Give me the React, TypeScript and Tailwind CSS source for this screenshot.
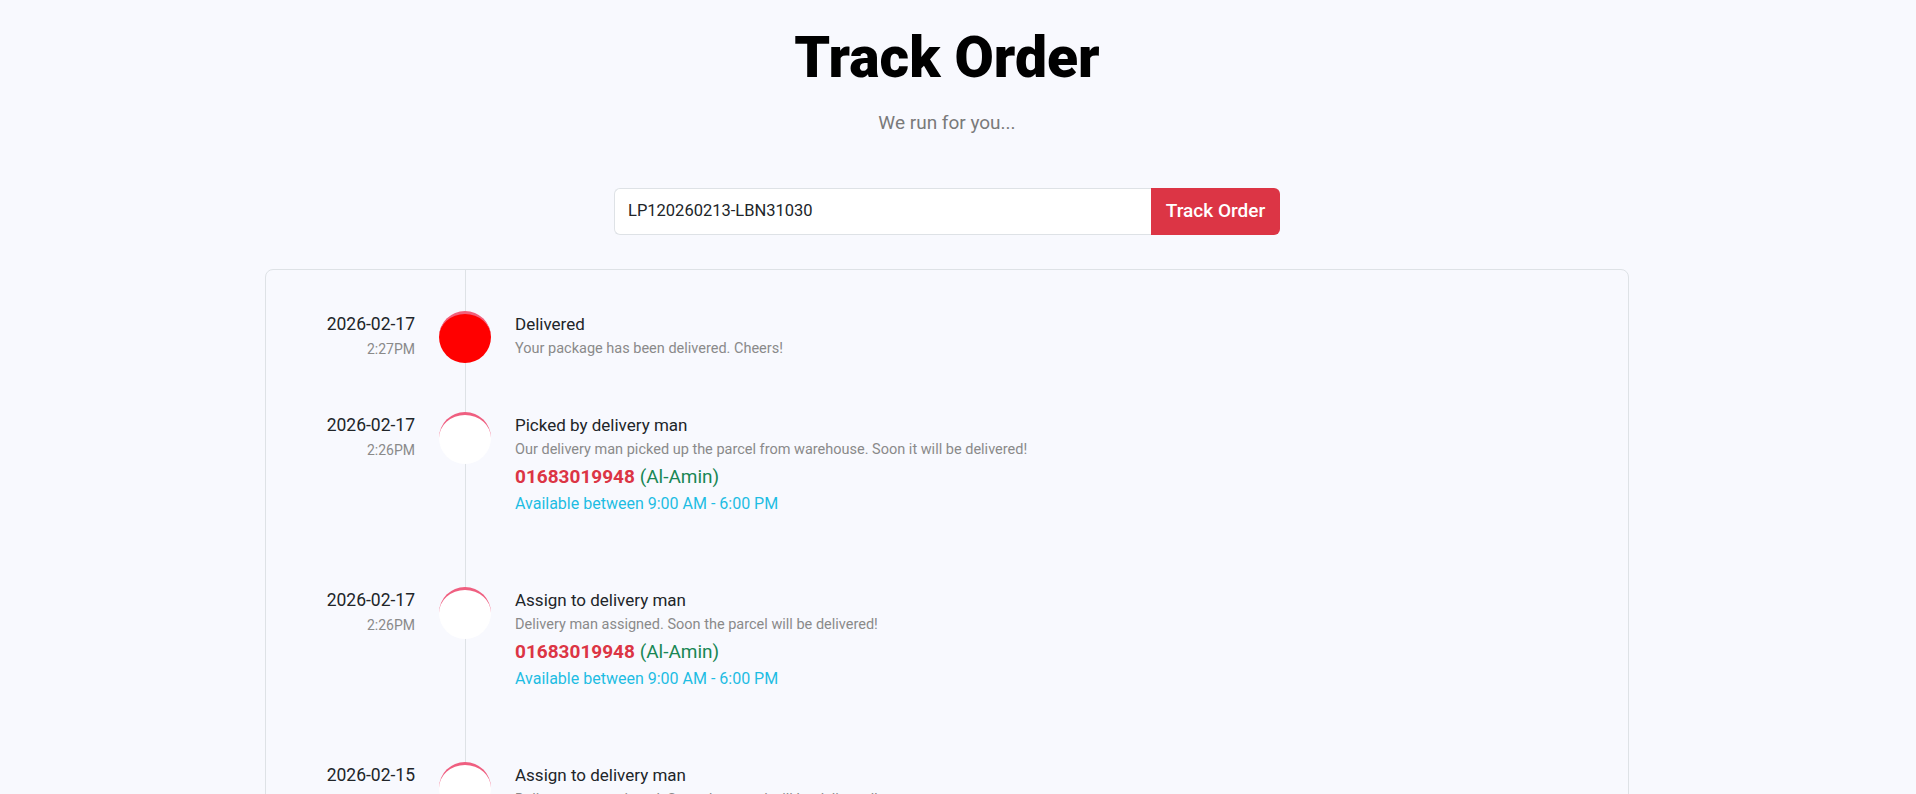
import React from 'react';

interface TrackEvent {
  date: string;
  time: string;
  title: string;
  note: string;
  phone?: string;
  man?: string;
  current?: boolean;
}

const events: TrackEvent[] = [
  {
    date: '2026-02-17',
    time: '2:27PM',
    title: 'Delivered',
    note: 'Your package has been delivered. Cheers!',
    current: true,
  },
  {
    date: '2026-02-17',
    time: '2:26PM',
    title: 'Picked by delivery man',
    note: 'Our delivery man picked up the parcel from warehouse. Soon it will be delivered!',
    phone: '01683019948',
    man: 'Al-Amin',
  },
  {
    date: '2026-02-17',
    time: '2:26PM',
    title: 'Assign to delivery man',
    note: 'Delivery man assigned. Soon the parcel will be delivered!',
    phone: '01683019948',
    man: 'Al-Amin',
  },
  {
    date: '2026-02-15',
    time: '11:42AM',
    title: 'Assign to delivery man',
    note: 'Delivery man assigned. Soon the parcel will be delivered!',
    phone: '01683019948',
    man: 'Al-Amin',
  },
  {
    date: '2026-02-14',
    time: '6:10PM',
    title: 'Received at warehouse',
    note: 'Your parcel has arrived at our warehouse.',
  },
  {
    date: '2026-02-13',
    time: '4:05PM',
    title: 'Order placed',
    note: 'Your order has been placed successfully.',
  },
];

const TimelineRow: React.FC<{ ev: TrackEvent }> = ({ ev }) => {
  const hasMan = !!ev.phone;
  return (
    <div className={`flex items-start ${hasMan ? 'h-[175px]' : 'h-[101px]'}`}>
      <div className="w-[149px] shrink-0 text-right pt-[3px]">
        <div className="text-[17.5px] leading-[20px] text-[#212529]">{ev.date}</div>
        <div className="text-[14px] leading-[20px] mt-[5px] text-[#8a8a8a]">{ev.time}</div>
      </div>
      <div className="w-[100px] shrink-0 flex justify-center">
        <div
          className={`relative z-10 w-[52px] h-[52px] rounded-full border-t-[3px] ${
            ev.current ? 'bg-[#ff0000] border-t-[#f2607a]' : 'bg-white border-t-[#ef5f80]'
          }`}
        />
      </div>
      <div className="pt-[3px]">
        <div className="text-[17px] leading-[20px] text-[#212529]">{ev.title}</div>
        <div className="text-[14.5px] leading-[20px] mt-[5px] text-[#8a8a8a]">{ev.note}</div>
        {hasMan && (
          <>
            <div className="text-[19px] leading-[24px] mt-[5px]">
              <span className="font-bold text-[#dc3545]">{ev.phone}</span>{' '}
              <span className="text-[#198754]">({ev.man})</span>
            </div>
            <div className="text-[16px] leading-[22px] mt-[4px] text-[#1ebde3]">
              Available between 9:00 AM - 6:00 PM
            </div>
          </>
        )}
      </div>
    </div>
  );
};

export default function App() {
  return (
    <div
      className="min-h-screen bg-[#f8f9fe] pb-[60px] pr-[22px]"
      style={{ fontFamily: 'Roboto, "Noto Sans", sans-serif' }}
    >
      <div className="pt-[24px] text-center">
        <h1 className="text-[57px] leading-[67px] font-black text-black">Track Order</h1>
        <p className="mt-[18px] text-[19px] leading-[27px] text-[#7a7a7a]">We run for you...</p>
      </div>

      <div className="mt-[52px] flex justify-center">
        <div className="flex w-[666px] h-[47px]">
          <input
            readOnly
            value="LP120260213-LBN31030"
            className="flex-1 min-w-0 bg-white border border-[#dee2e6] border-r-0 rounded-l-[6px] px-[13px] text-[16.5px] text-[#212529] outline-none"
          />
          <button className="w-[129px] bg-[#dc3545] text-white text-[19px] font-medium rounded-r-[6px]">
            Track Order
          </button>
        </div>
      </div>

      <div className="mt-[34px] mx-auto w-[1364px]">
        <div className="relative border border-[#dee2e6] rounded-[8px] pt-[41px] pb-[20px]">
          <div className="absolute top-0 bottom-0 left-[199px] w-px bg-[#dee2e6]" />
          {events.map((ev, i) => (
            <TimelineRow key={i} ev={ev} />
          ))}
        </div>
      </div>
    </div>
  );
}
